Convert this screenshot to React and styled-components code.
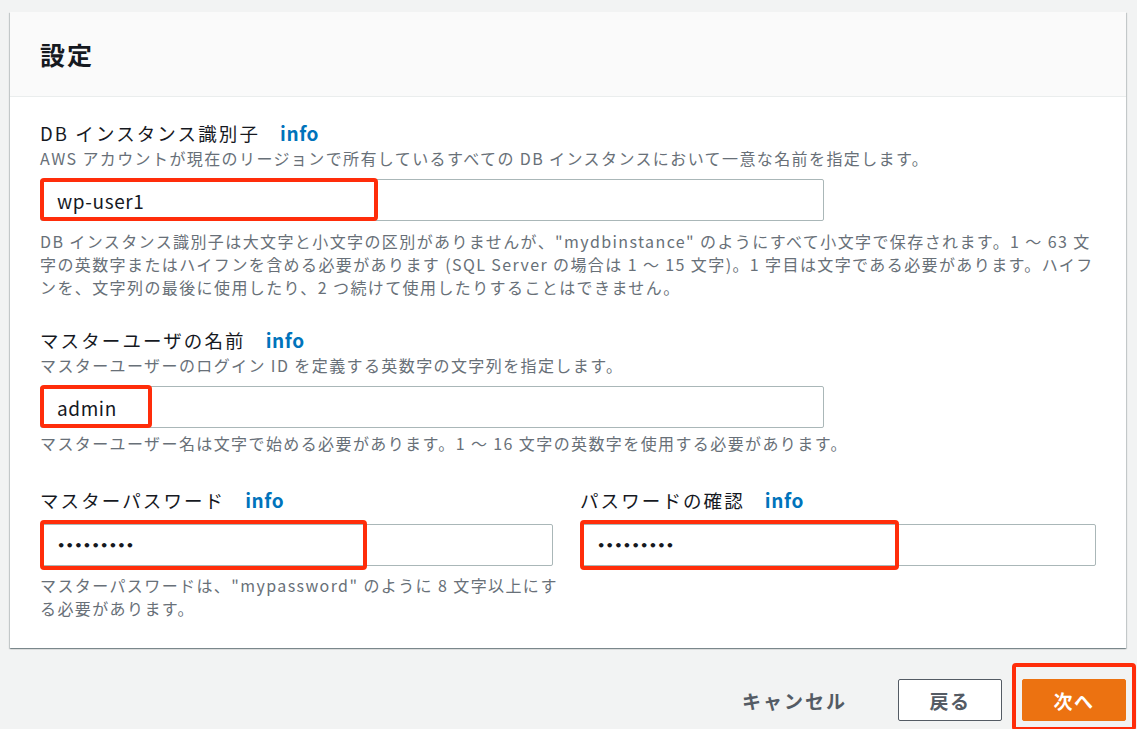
import React from "react";
import styled, { createGlobalStyle } from "styled-components";

const Global = createGlobalStyle`
  html, body { margin: 0; padding: 0; }
  body {
    background: #f2f3f3;
    font-family: "Noto Sans CJK JP", "Noto Sans", sans-serif;
    color: #16191f;
  }
`;

const Page = styled.div`
  width: 1137px;
  height: 729px;
  box-sizing: border-box;
  padding: 12px 11px 0 10px;
  display: flex;
  flex-direction: column;
  overflow: hidden;
`;

const Panel = styled.section`
  background: #fff;
  box-shadow: 0 1px 1px 0 rgba(0, 28, 36, 0.3), 1px 1px 1px 0 rgba(0, 28, 36, 0.15),
    -1px 1px 1px 0 rgba(0, 28, 36, 0.15);
  height: 636px;
  display: flex;
  flex-direction: column;
`;

const PanelHeader = styled.header`
  height: 85px;
  box-sizing: border-box;
  background: #fafafa;
  border-bottom: 1px solid #eaeded;
  padding: 0 30px;
  display: flex;
  align-items: center;
`;

const Title = styled.h2`
  margin: 0;
  font-size: 25px;
  letter-spacing: 2px;
  font-weight: 700;
  color: #16191f;
`;

const Body = styled.div`
  padding: 23px 30px 0 30px;
  display: flex;
  flex-direction: column;
`;

const Field = styled.div`
  display: flex;
  flex-direction: column;
  min-width: 0;
  margin-bottom: ${(p) => p.$gap || 0}px;
`;

const Label = styled.div`
  font-size: 18.5px;
  letter-spacing: 2.1px;
  line-height: 26px;
  color: #16191f;
  display: flex;
  align-items: baseline;
`;

const Info = styled.a`
  color: #0073bb;
  font-weight: 700;
  font-size: 19px;
  letter-spacing: 0.6px;
  margin-left: 20px;
  text-decoration: none;
`;

const Desc = styled.div`
  font-size: 16px;
  letter-spacing: 1.4px;
  line-height: 22px;
  color: #687078;
  margin-top: 1px;
`;

const InputWrap = styled.div`
  position: relative;
  width: ${(p) => p.$w}px;
  margin-top: ${(p) => p.$mt || 8}px;
`;

const Input = styled.div`
  height: 42px;
  box-sizing: border-box;
  border: 1px solid #aab7b8;
  border-radius: 2px;
  background: #fff;
  display: flex;
  align-items: center;
  padding-left: 16px;
  font-size: 19px;
  letter-spacing: 0.6px;
  color: #16191f;
`;

const Dots = styled.span`
  font-size: 13px;
  letter-spacing: 0.3px;
  font-weight: 700;
  font-family: "DejaVu Sans", sans-serif;
`;

const Highlight = styled.div`
  position: absolute;
  left: ${(p) => p.$l || 0}px;
  top: ${(p) => p.$t || 0}px;
  width: ${(p) => p.$w}px;
  height: ${(p) => p.$h}px;
  box-sizing: border-box;
  border: 4px solid #ff2d0a;
  border-radius: 4px;
  pointer-events: none;
`;

const Help = styled.div`
  font-size: 16px;
  letter-spacing: 1.4px;
  line-height: 23px;
  color: #687078;
  margin-top: ${(p) => p.$mt || 8}px;
  width: ${(p) => (p.$w ? `${p.$w}px` : "auto")};
  max-width: ${(p) => p.$mw || 1056}px;
`;

const Columns = styled.div`
  display: grid;
  grid-template-columns: 513px 516px;
  column-gap: 27px;
`;

const Footer = styled.div`
  display: flex;
  justify-content: flex-end;
  align-items: center;
  padding-top: 31px;
  gap: 20px;
`;

const LinkButton = styled.button`
  background: none;
  border: none;
  font-family: inherit;
  font-size: 19px;
  letter-spacing: 2px;
  font-weight: 700;
  color: #545b64;
  padding: 0;
  margin-right: 31px;
`;

const Button = styled.button`
  position: relative;
  width: 104px;
  height: 42px;
  border-radius: 2px;
  font-family: inherit;
  font-size: 19px;
  letter-spacing: 1.5px;
  font-weight: 700;
  border: 1px solid ${(p) => (p.$primary ? "#ec7211" : "#545b64")};
  background: ${(p) => (p.$primary ? "#ec7211" : "#fff")};
  color: ${(p) => (p.$primary ? "#fff" : "#545b64")};
  padding: 0;
`;

const dots = "•••••••••";

export default function App() {
  return (
    <>
      <Global />
      <Page>
        <Panel>
          <PanelHeader>
            <Title>設定</Title>
          </PanelHeader>
          <Body>
            <Field $gap={28}>
              <Label>
                DB インスタンス識別子<Info>info</Info>
              </Label>
              <Desc>AWS アカウントが現在のリージョンで所有しているすべての DB インスタンスにおいて一意な名前を指定します。</Desc>
              <InputWrap $w={784} $mt={10}>
                <Input>wp-user1</Input>
                <Highlight $w={338} $h={43} $t={-1} />
              </InputWrap>
              <Help $mt={9}>
                DB インスタンス識別子は大文字と小文字の区別がありませんが、"mydbinstance" のようにすべて小文字で保存されます。1 ～ 63 文字の英数字またはハイフンを含める必要があります (SQL Server の場合は 1 ～ 15 文字)。1 字目は文字である必要があります。ハイフンを、文字列の最後に使用したり、2 つ続けて使用したりすることはできません。
              </Help>
            </Field>
            <Field $gap={32}>
              <Label>
                マスターユーザの名前<Info>info</Info>
              </Label>
              <Desc>マスターユーザーのログイン ID を定義する英数字の文字列を指定します。</Desc>
              <InputWrap $w={784} $mt={10}>
                <Input>admin</Input>
                <Highlight $w={112} $h={43} $t={-1} />
              </InputWrap>
              <Help $mt={4}>マスターユーザー名は文字で始める必要があります。1 ～ 16 文字の英数字を使用する必要があります。</Help>
            </Field>
            <Columns>
              <Field>
                <Label>
                  マスターパスワード<Info>info</Info>
                </Label>
                <InputWrap $w={513} $mt={11}>
                  <Input>
                    <Dots>{dots}</Dots>
                  </Input>
                  <Highlight $w={327} $h={50} $t={-4} />
                </InputWrap>
                <Help $mt={8} $w={522}>
                  マスターパスワードは、"mypassword" のように 8 文字以上にする必要があります。
                </Help>
              </Field>
              <Field>
                <Label>
                  パスワードの確認<Info>info</Info>
                </Label>
                <InputWrap $w={516} $mt={11}>
                  <Input>
                    <Dots>{dots}</Dots>
                  </Input>
                  <Highlight $w={319} $h={50} $t={-4} />
                </InputWrap>
              </Field>
            </Columns>
          </Body>
        </Panel>
        <Footer>
          <LinkButton>キャンセル</LinkButton>
          <Button>戻る</Button>
          <Button $primary>
            次へ
            <Highlight $w={124} $h={68} $t={-17} $l={-11} />
          </Button>
        </Footer>
      </Page>
    </>
  );
}
